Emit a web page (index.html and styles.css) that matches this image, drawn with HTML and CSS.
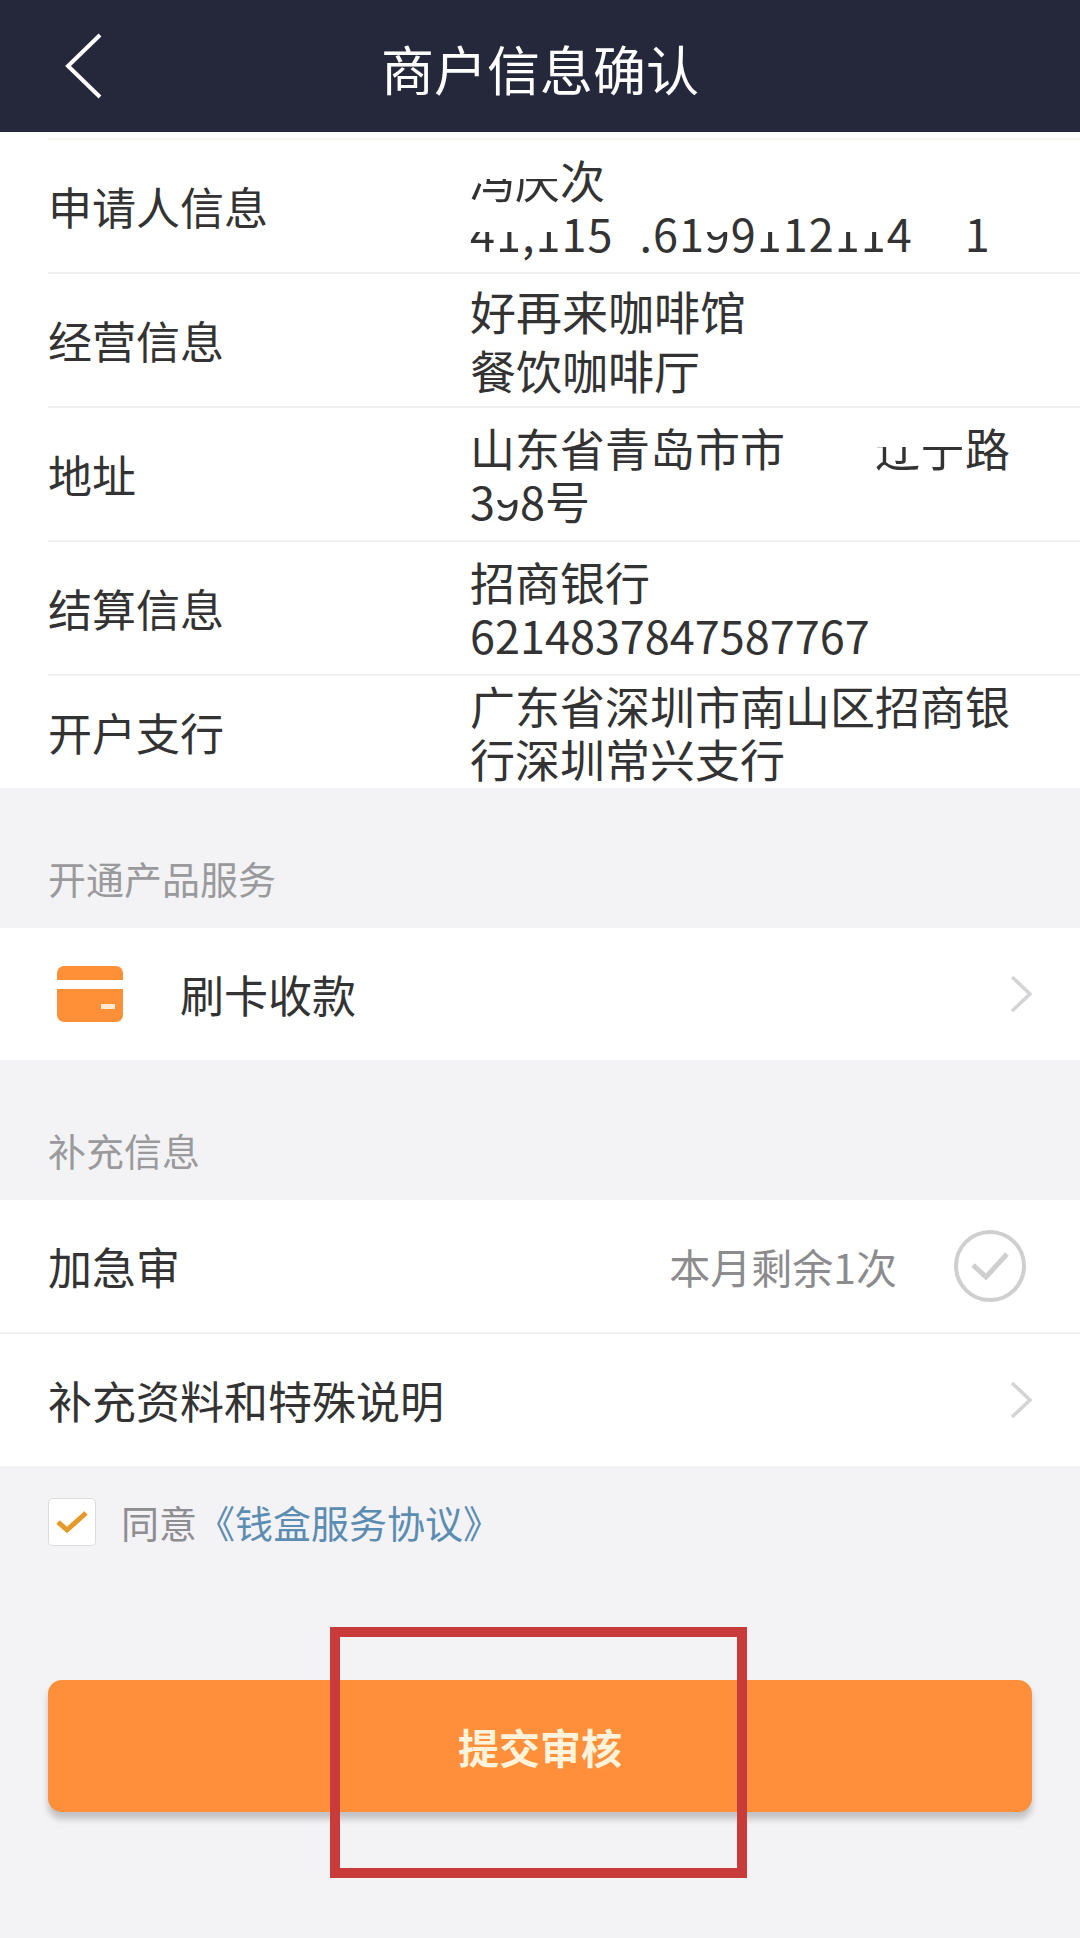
FILE: index.html
```html
<!DOCTYPE html>
<html lang="zh">
    <head>
        <meta charset="utf-8">
        <title>商户信息确认</title>
        <link rel="stylesheet" href="styles.css">
    </head>
    <body>
        <div class="topbar">
            <svg class="back" width="40" height="68" viewBox="0 0 40 68">
                <path d="M36 3 L4 34 L36 65" fill="none" stroke="#fff" stroke-width="4"/>
            </svg>
            <div class="title">商户信息确认</div>
        </div>

        <div class="info">
            <div class="info-row first">
                <div class="label">申请人信息</div>
                <div class="value"><span class="part">冯庆</span>次<br><span class="digits"><span class="part">41</span>,<span class="part">1</span>15<span class="hid">1</span>.61<span class="part">9</span>9<span class="part">1</span>12<span class="part">11</span>4<span class="hid">22</span>1</span></div>
            </div>
            <div class="info-row wide">
                <div class="label">经营信息</div>
                <div class="value">好再来咖啡馆<br>餐饮咖啡厅</div>
            </div>
            <div class="info-row">
                <div class="label">地址</div>
                <div class="value">山东省青岛市市<span class="hid">北区</span><span class="part">辽宁</span>路<br>3<span class="part">9</span>8号</div>
            </div>
            <div class="info-row">
                <div class="label">结算信息</div>
                <div class="value">招商银行<br>6214837847587767</div>
            </div>
            <div class="info-row last">
                <div class="label">开户支行</div>
                <div class="value">广东省深圳市南山区招商银<br>行深圳常兴支行</div>
            </div>
        </div>

        <div class="section-title">开通产品服务</div>
        <div class="block">
            <div class="row">
                <div class="card-icon"><span class="card-mark"></span></div>
                <div class="row-text">刷卡收款</div>
                <svg class="arrow" width="24" height="38" viewBox="0 0 24 38">
                    <path d="M3 2 L21 19 L3 36" fill="none" stroke="#d4d4d6" stroke-width="3.5"/>
                </svg>
            </div>
        </div>

        <div class="section-title">补充信息</div>
        <div class="block">
            <div class="row line urgent">
                <div class="row-name">加急审</div>
                <div class="remain">本月剩余1次</div>
                <svg class="tick" width="74" height="74" viewBox="0 0 74 74">
                    <circle cx="37" cy="37" r="34" fill="none" stroke="#cfcfcf" stroke-width="4"/>
                    <path d="M20 36 L33 48 L54 25" fill="none" stroke="#cfcfcf" stroke-width="5"/>
                </svg>
            </div>
            <div class="row">
                <div class="row-name">补充资料和特殊说明</div>
                <svg class="arrow" width="24" height="38" viewBox="0 0 24 38">
                    <path d="M3 2 L21 19 L3 36" fill="none" stroke="#d4d4d6" stroke-width="3.5"/>
                </svg>
            </div>
        </div>

        <div class="agree">
            <div class="checkbox">
                <svg width="34" height="26" viewBox="0 0 34 26">
                    <path d="M3 13 L12 21 L31 4" fill="none" stroke="#e39a2b" stroke-width="5"/>
                </svg>
            </div>
            <div class="agree-text">同意<a class="agree-link">《钱盒服务协议》</a></div>
        </div>

        <div class="submit">
            提交审核
            <div class="mark"></div>
        </div>
    </body>
</html>
```

FILE: styles.css
```css
body
{
    margin: 0;
    height: 1938px;
    overflow: hidden;
    background-color: #f3f3f5;
    font-family: "Noto Sans CJK SC", "Noto Sans", sans-serif;
    color: #333;
}

.topbar
{
    height: 132px;
    background-color: #25273a;
    display: flex;
    align-items: center;
    justify-content: center;
    position: relative;
}

.back
{
    position: absolute;
    left: 64px;
    top: 32px;
}

.title
{
    font-size: 53px;
    color: #fff;
    margin-top: 4px;
}

.info
{
    background-color: #fff;
    padding-top: 6px;
}

.info-row
{
    height: 132px;
    margin-left: 48px;
    border-top: 2px solid #f0f0f1;
    display: flex;
    align-items: center;
}

.info-row.first
{
    border-top-color: #f7f7f2;
}

.info-row.last
{
    height: 112px;
    overflow: hidden;
}

.label
{
    width: 422px;
    font-size: 44px;
}

.value
{
    font-size: 45px;
    line-height: 53px;
}

.wide .value
{
    font-size: 46px;
    line-height: 59px;
}

.digits
{
    letter-spacing: 1px;
}

.hid
{
    color: #fff;
}

.part
{
    color: transparent;
    background: linear-gradient(#fff 50%, #333 50%);
    -webkit-background-clip: text;
    background-clip: text;
}

.section-title
{
    height: 99px;
    padding: 41px 48px 0;
    line-height: 98px;
    font-size: 38px;
    color: #9a9a9c;
}

.block
{
    background-color: #fff;
}

.row
{
    height: 132px;
    padding: 0 47px 0 48px;
    display: flex;
    align-items: center;
    font-size: 44px;
}

.row.line
{
    height: 132px;
    border-bottom: 2px solid #f0f0f1;
}

.row.urgent
{
    padding-right: 53px;
}

.row-name
{
    flex: 1;
}

.row-text
{
    flex: 1;
    margin-left: 57px;
}

.card-icon
{
    width: 66px;
    height: 56px;
    border-radius: 7px;
    margin-left: 9px;
    position: relative;
    background: linear-gradient(#ff9038 14px, #fff 14px, #fff 23px, #ff9038 23px);
}

.card-mark
{
    position: absolute;
    right: 8px;
    bottom: 13px;
    width: 14px;
    height: 5px;
    background-color: #ffe9cf;
}

.remain
{
    color: #8c8c8e;
    margin-right: 56px;
    font-size: 41px;
}

.agree
{
    height: 47px;
    padding: 32px 48px 0;
    display: flex;
    align-items: center;
}

.checkbox
{
    width: 46px;
    height: 46px;
    border: 1px solid #dcdcdc;
    border-radius: 4px;
    background-color: #fff;
    display: flex;
    align-items: center;
    justify-content: center;
}

.agree-text
{
    margin-left: 25px;
    font-size: 38px;
    color: #8d8d92;
}

.agree-link
{
    color: #5b8cb2;
}

.submit
{
    width: 984px;
    height: 132px;
    margin: 135px 0 0 48px;
    background-color: #ff8f3a;
    border-radius: 14px;
    box-shadow: 0 7px 6px rgba(120, 120, 120, 0.4);
    display: flex;
    align-items: center;
    justify-content: center;
    font-size: 41px;
    font-weight: bold;
    color: #fff3dc;
    position: relative;
}

.mark
{
    position: absolute;
    left: 282px;
    top: -53px;
    width: 417px;
    height: 251px;
    box-sizing: border-box;
    border: 10px solid #c93a3a;
}
```
